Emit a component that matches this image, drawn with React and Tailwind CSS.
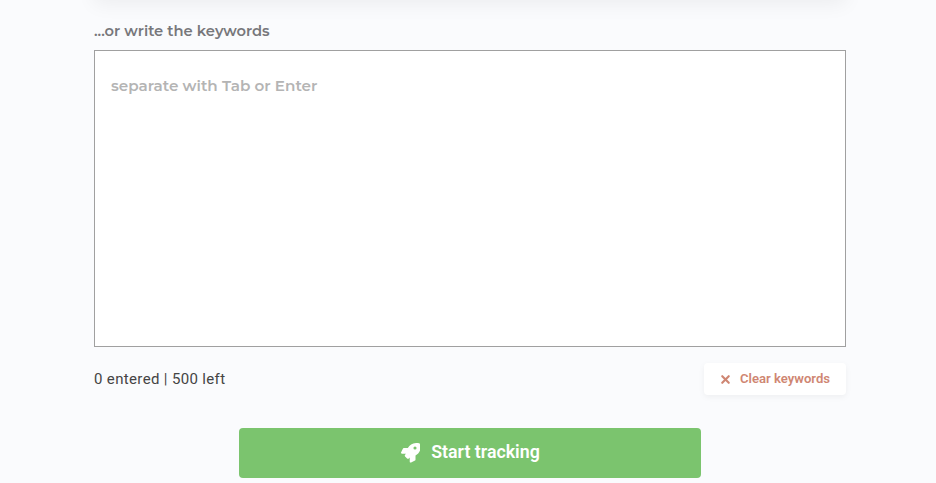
import React from 'react';
import { X } from 'lucide-react';

const Rocket = () => (
  <svg viewBox="0 0 512 512" className="h-[20px] w-[20px] fill-white">
    <path d="M505 19c-1-5-6-10-11-11C462 1 437 0 412 0 309 0 247 55 201 128H97c-8 0-17 6-21 13L26 241c-2 4-2 7-2 11 0 13 11 24 24 24h105l-23 23c-11 11-13 31 0 45l51 51c12 12 32 12 45 0l23-23v105c0 13 11 24 24 24 4 0 7-1 11-3l100-50c7-4 13-13 13-21V323c73-46 128-108 128-211 0-25 0-50-20-93zM384 168a40 40 0 1 1 0-80 40 40 0 0 1 0 80z" />
  </svg>
);

const App = () => {
  return (
    <div className="relative h-[483px] w-[936px] overflow-hidden bg-[#fafbfd] font-['Roboto',sans-serif]">
      <div className="absolute left-[94px] top-[-40px] h-[40px] w-[752px] bg-white shadow-[0_4px_20px_rgba(0,0,0,0.06)]" />

      <div className="ml-[94px] w-[752px] pt-[22px]">
        <label className="block text-[14.7px] font-semibold leading-[18px] text-[#77777b] font-['Montserrat','Inter',sans-serif]">
          ...or write the keywords
        </label>

        <div className="mt-[10px] h-[297px] w-full border border-[#a0a0a0] bg-white px-[16px] py-[26px] text-[15.2px] font-semibold leading-[18px] text-[#b4b4b4] font-['Montserrat','Inter',sans-serif]">
          separate with Tab or Enter
        </div>

        <div className="mt-[16px] flex items-center justify-between">
          <span className="text-[15px] tracking-[0.35px] text-[#444444]">0 entered | 500 left</span>
          <button className="flex h-[32px] w-[142px] items-center justify-center gap-[8px] rounded-[4px] bg-white pr-[1px] text-[13.1px] font-semibold text-[#cf8672] shadow-[0_2px_6px_rgba(0,0,0,0.05)]">
            <X className="h-[13px] w-[13px]" strokeWidth={4} />
            Clear keywords
          </button>
        </div>

        <button className="mx-auto mt-[33px] flex h-[50px] w-[462px] items-center justify-center gap-[11px] rounded-[4px] bg-[#7bc46e] pb-[1px] text-[17.8px] font-semibold text-white">
          <Rocket />
          Start tracking
        </button>
      </div>
    </div>
  );
};

export default App;
